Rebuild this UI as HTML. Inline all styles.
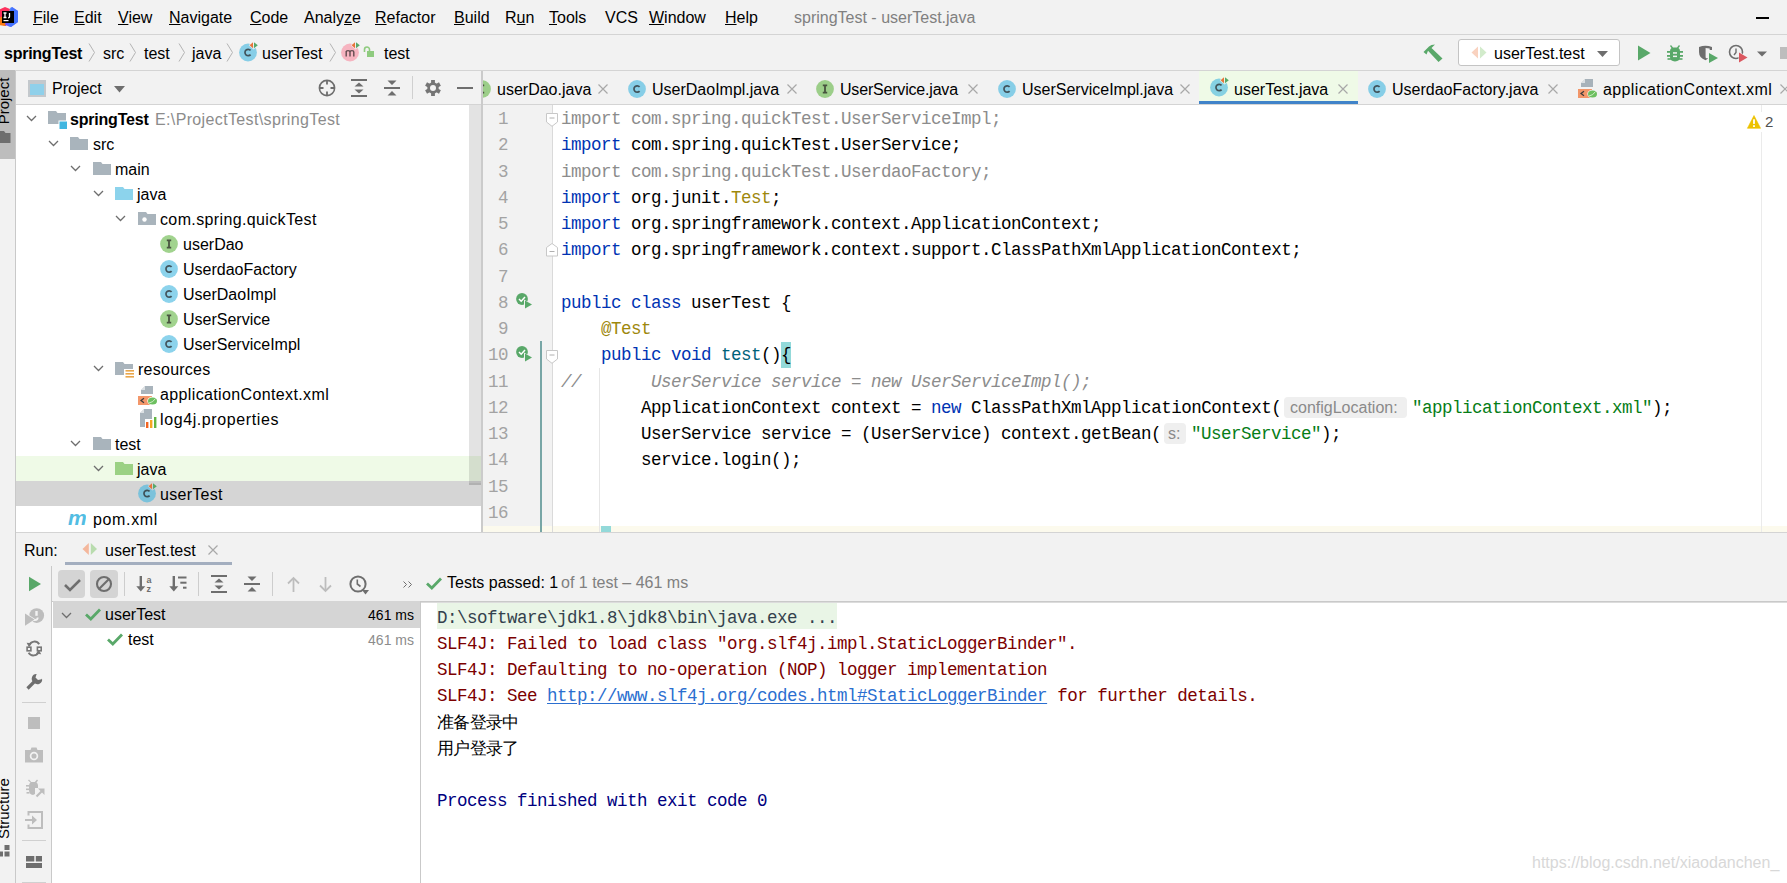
<!DOCTYPE html>
<html><head><meta charset="utf-8"><title>springTest - userTest.java</title>
<style>
*{margin:0;padding:0;box-sizing:border-box}
html,body{width:1787px;height:883px;overflow:hidden;background:#f2f2f2;font-family:"Liberation Sans",sans-serif;font-size:16px;color:#000;position:relative}
.a{position:absolute}
.t{position:absolute;white-space:pre;line-height:20px;font-size:16px}
.u{text-decoration:underline;text-underline-offset:1px}
.m{position:absolute;white-space:pre;font-family:"Liberation Mono",monospace;font-size:17.5px;letter-spacing:-0.5px;line-height:26px}
svg{position:absolute;overflow:visible}
body{--bg:#f2f2f2}
</style></head><body>
<svg width="0" height="0" style="position:absolute;left:0;top:0"><defs>
<g id="ic-c"><circle cx="10" cy="10" r="8.9" fill="#40b6e0" fill-opacity=".6"/><path d="M12.6,7.9 A3.2,3.2 0 1 0 12.6,12.1" fill="none" stroke="#231f20" stroke-opacity=".7" stroke-width="1.7"/></g>
<g id="ic-i"><circle cx="10" cy="10" r="8.9" fill="#62b543" fill-opacity=".6"/><path d="M7.8,6.3 H12.2 M10,6.3 V13.7 M7.8,13.7 H12.2" fill="none" stroke="#231f20" stroke-opacity=".7" stroke-width="1.8"/></g>
<g id="mark"><path d="M14,0.3 V6.3 L10.6,3.3Z" fill="#e8743a" stroke="var(--bg)" stroke-width="1.1" paint-order="stroke"/><path d="M15,0.3 V6.3 L18.8,3.3Z" fill="#59a869" stroke="var(--bg)" stroke-width="1.1" paint-order="stroke"/></g>
<g id="ic-ctest"><circle cx="9" cy="10.5" r="8.9" fill="#40b6e0" fill-opacity=".6"/><path d="M11.6,8.4 A3.2,3.2 0 1 0 11.6,12.6" fill="none" stroke="#231f20" stroke-opacity=".7" stroke-width="1.7"/><use href="#mark"/></g>
<g id="ic-mtest"><circle cx="9" cy="10.5" r="8.9" fill="#f98b9e" fill-opacity=".6"/><path d="M5.2,14.5 V9 M5.2,10 Q5.2,8.6 7,8.6 Q9,8.6 9,10 V14.5 M9,10 Q9,8.6 11,8.6 Q12.8,8.6 12.8,10 V14.5" fill="none" stroke="#231f20" stroke-opacity=".7" stroke-width="1.4"/><use href="#mark"/></g>
<g id="fold"><path d="M0,0 H18 V13 H0Z M0,0 H8 L9.5,2 H0Z" fill="#9aa7b0" fill-opacity=".85"/></g>
<g id="chev"><path d="M1,1 L5.5,5.5 L10,1" fill="none" stroke="#6e6e6e" stroke-width="1.3"/></g>
<g id="xclose"><path d="M0.5,0.5 L9.5,9.5 M9.5,0.5 L0.5,9.5" fill="none" stroke="#a8a8a8" stroke-width="1.2"/></g>
</defs></svg>
<div class="a" style="left:0;top:34px;width:1787px;height:1px;background:#d4d4d4"></div>
<svg style="left:0;top:6px" width="20" height="22" viewBox="0 0 20 22">
<path d="M-2,4 L5,1 L10,3 L6,20 L-2,18Z" fill="#fe315d"/>
<path d="M-2,12 L4,10 L6,20 L-2,19Z" fill="#f97a12"/>
<path d="M9,6 L12,1 L18,5 L18,16 L11,21 L5,19Z" fill="#6b57ff"/>
<path d="M10,2 L12,1 L18,5 L18,16 L11,21 L8,20Z" fill="#3b7cff" fill-opacity=".8"/>
<rect x="2" y="5" width="12" height="12" fill="#000"/>
<path d="M3.5,7 H6.5 M5,7 V11.5 M3.5,11.5 H6.5 M9.5,7 V10.5 Q9.5,12 8,11.8" fill="none" stroke="#fff" stroke-width="1.3"/>
<rect x="3.5" y="14" width="5" height="1.2" fill="#fff"/>
</svg>
<span class="t" style="left:33px;top:8px;"><span class="u">F</span>ile</span>
<span class="t" style="left:74px;top:8px;"><span class="u">E</span>dit</span>
<span class="t" style="left:118px;top:8px;"><span class="u">V</span>iew</span>
<span class="t" style="left:169px;top:8px;"><span class="u">N</span>avigate</span>
<span class="t" style="left:250px;top:8px;"><span class="u">C</span>ode</span>
<span class="t" style="left:304px;top:8px;">Analy<span class="u">z</span>e</span>
<span class="t" style="left:375px;top:8px;"><span class="u">R</span>efactor</span>
<span class="t" style="left:454px;top:8px;"><span class="u">B</span>uild</span>
<span class="t" style="left:505px;top:8px;">R<span class="u">u</span>n</span>
<span class="t" style="left:549px;top:8px;"><span class="u">T</span>ools</span>
<span class="t" style="left:605px;top:8px;">VCS</span>
<span class="t" style="left:649px;top:8px;"><span class="u">W</span>indow</span>
<span class="t" style="left:725px;top:8px;"><span class="u">H</span>elp</span>
<span class="t" style="left:794px;top:8px;color:#808080">springTest - userTest.java</span>
<div class="a" style="left:1756px;top:17px;width:13px;height:1.5px;background:#000"></div>
<div class="a" style="left:0;top:70px;width:1787px;height:1px;background:#d4d4d4"></div>
<span class="t" style="left:4px;top:44px;font-weight:bold;letter-spacing:-0.25px">springTest</span>
<svg style="left:88px;top:43px" width="8" height="20"><path d="M1,0.5 L6.5,9.5 L1,18.5" fill="none" stroke="#b4b4b4" stroke-width="1"/></svg>
<svg style="left:129px;top:43px" width="8" height="20"><path d="M1,0.5 L6.5,9.5 L1,18.5" fill="none" stroke="#b4b4b4" stroke-width="1"/></svg>
<svg style="left:178px;top:43px" width="8" height="20"><path d="M1,0.5 L6.5,9.5 L1,18.5" fill="none" stroke="#b4b4b4" stroke-width="1"/></svg>
<svg style="left:226px;top:43px" width="8" height="20"><path d="M1,0.5 L6.5,9.5 L1,18.5" fill="none" stroke="#b4b4b4" stroke-width="1"/></svg>
<svg style="left:329px;top:43px" width="8" height="20"><path d="M1,0.5 L6.5,9.5 L1,18.5" fill="none" stroke="#b4b4b4" stroke-width="1"/></svg>
<span class="t" style="left:103px;top:44px;">src</span>
<span class="t" style="left:144px;top:44px;">test</span>
<span class="t" style="left:192px;top:44px;">java</span>
<svg style="left:239px;top:42px" width="20" height="20" viewBox="0 0 20 20"><use href="#ic-ctest"/></svg>
<span class="t" style="left:262px;top:44px;">userTest</span>
<svg style="left:341px;top:42px" width="20" height="20" viewBox="0 0 20 20"><use href="#ic-mtest"/></svg>
<svg style="left:363px;top:46px" width="12" height="12" viewBox="0 0 12 12"><path d="M1.5,6 V3.5 A2.5,2.5 0 0 1 6.5,3.5 V5" fill="none" stroke="#8fcb7f" stroke-width="1.6"/><rect x="4" y="5" width="7" height="6" fill="#8fcb7f"/></svg>
<span class="t" style="left:384px;top:44px;">test</span>
<svg style="left:1423px;top:43px" width="20" height="20" viewBox="0 0 20 20"><path d="M0.5,9 L6,3.5 Q8,1.5 12,1.5 L10,3.5 L8.5,5 L19.5,15.5 L15.5,19 L5,7.8 L3.5,11.5 Z" fill="#59a869"/></svg>
<div class="a" style="left:1458px;top:39px;width:162px;height:27px;border:1px solid #c4c4c4;border-radius:3px;background:#fff"></div>
<svg style="left:1471px;top:46px" width="16" height="14" viewBox="0 0 16 14"><path d="M7,0.5 L7,12.5 L0.5,6.5Z" fill="#f9d2bf"/><path d="M9,0.5 L9,12.5 L15.5,6.5Z" fill="#d2ebcb"/></svg>
<span class="t" style="left:1494px;top:44px;">userTest.test</span>
<svg style="left:1597px;top:51px" width="12" height="7" viewBox="0 0 12 7"><path d="M0,0 H11 L5.5,6Z" fill="#6e6e6e"/></svg>
<svg style="left:1637px;top:45px" width="14" height="16" viewBox="0 0 14 16"><path d="M1,0.5 L13.5,8 L1,15.5Z" fill="#59a869"/></svg>
<svg style="left:1666px;top:44px" width="18" height="18" viewBox="0 0 18 18"><g fill="#59a869"><path d="M5,1 L7,3.5 H11 L13,1 L14,2 L12.5,4 Q14,5 14,7 V13 Q14,17 9,17.5 Q4,17 4,13 V7 Q4,5 5.5,4 L4,2Z"/><rect x="1" y="7" width="16" height="1.8"/><rect x="1" y="11" width="16" height="1.8"/><rect x="1.5" y="14.2" width="15" height="1.6"/></g><rect x="7" y="8.2" width="4" height="1.5" fill="#f2f2f2"/><rect x="7" y="11.6" width="4" height="1.5" fill="#f2f2f2"/></svg>
<svg style="left:1698px;top:45px" width="22" height="19" viewBox="0 0 22 19"><path d="M1,1.9 Q7.5,-0.4 14,1.9 V5 H11.7 V3.6 Q9.5,3 7.6,3 V12 Q7.6,13.2 8.6,13.2 H10 V13.6 Q8.5,15 7.5,15.2 Q1,13 1,7Z" fill="#6e6e6e"/><path d="M11,8 L20,13 L11,18Z" fill="#59a869"/></svg>
<svg style="left:1728px;top:44px" width="22" height="20" viewBox="0 0 22 20"><circle cx="8" cy="8" r="6.5" fill="none" stroke="#6e6e6e" stroke-width="1.6"/><path d="M8,4.5 V8.5 L6,11" fill="none" stroke="#6e6e6e" stroke-width="1.4"/><path d="M10.5,7.5 L20,13 L10.5,19Z" fill="#f2f2f2"/><path d="M11,8.5 L19.5,13.5 L11,18.5Z" fill="#db5860"/></svg>
<svg style="left:1757px;top:51px" width="11" height="7" viewBox="0 0 11 7"><path d="M0,0.5 H10 L5,5.5Z" fill="#6e6e6e"/></svg>
<div class="a" style="left:1780px;top:47px;width:7px;height:12px;background:#bdbdbd"></div>
<div class="a" style="left:15px;top:71px;width:1px;height:812px;background:#c9c9c9"></div>
<div class="a" style="left:0;top:70px;width:15px;height:89px;background:#bdbdbd"></div>
<span class="t" style="left:-26px;top:91px;transform:rotate(-90deg);transform-origin:center;width:60px;text-align:center;font-size:15px">Project</span>
<svg style="left:0;top:131px" width="11" height="12" viewBox="0 0 11 12"><path d="M-2,0 H4 L5.5,2 H10.5 V12 H-2Z" fill="#6e6e6e"/></svg>
<span class="t" style="left:-26px;top:799px;transform:rotate(-90deg);transform-origin:center;width:60px;text-align:center;font-size:15px">Structure</span>
<svg style="left:0;top:845px" width="10" height="12" viewBox="0 0 10 12"><rect x="4.5" y="0" width="5" height="5" fill="#6e6e6e"/><rect x="-2" y="6.5" width="5" height="5" fill="#6e6e6e"/><rect x="4.5" y="6.5" width="5" height="5" fill="#6e6e6e"/></svg>
<div class="a" style="left:16px;top:104px;width:465px;height:1px;background:#d4d4d4"></div>
<div class="a" style="left:16px;top:105px;width:465px;height:427px;background:#fff"></div>
<svg style="left:28px;top:80px" width="18" height="17" viewBox="0 0 18 17"><rect x="0" y="0" width="18" height="17" fill="#c3c8cc"/><rect x="2" y="4" width="14" height="11" fill="#8fd0ea"/></svg>
<span class="t" style="left:52px;top:79px;">Project</span>
<svg style="left:114px;top:86px" width="12" height="7" viewBox="0 0 12 7"><path d="M0,0 H11 L5.5,6.5Z" fill="#6e6e6e"/></svg>
<svg style="left:318px;top:79px" width="18" height="18" viewBox="0 0 18 18"><circle cx="9" cy="9" r="7.6" fill="none" stroke="#6e6e6e" stroke-width="1.6"/><path d="M9,1.5 V5.5 M9,12.5 V16.5 M1.5,9 H5.5 M12.5,9 H16.5" stroke="#6e6e6e" stroke-width="1.8"/></svg>
<svg style="left:351px;top:79px" width="16" height="18" viewBox="0 0 16 18"><rect x="0" y="0" width="16" height="2" fill="#6e6e6e"/><rect x="0" y="16" width="16" height="2" fill="#6e6e6e"/><path d="M3.5,7.5 L8,3.5 L12.5,7.5Z M3.5,10.5 L8,14.5 L12.5,10.5Z" fill="#6e6e6e"/></svg>
<svg style="left:384px;top:80px" width="16" height="16" viewBox="0 0 16 16"><rect x="0" y="7" width="16" height="2" fill="#6e6e6e"/><path d="M3.5,0.5 L8,5 L12.5,0.5Z M3.5,15.5 L8,11 L12.5,15.5Z" fill="#6e6e6e"/></svg>
<div class="a" style="left:412px;top:76px;width:1px;height:23px;background:#d0d0d0"></div>
<svg style="left:425px;top:80px" width="16" height="16" viewBox="0 0 16 16"><g fill="#757575"><circle cx="8" cy="8" r="5.7"/>
<rect x="6.1" y="0" width="3.8" height="16"/><rect x="6.1" y="0" width="3.8" height="16" transform="rotate(60 8 8)"/><rect x="6.1" y="0" width="3.8" height="16" transform="rotate(120 8 8)"/></g><circle cx="8" cy="8" r="3" fill="#f2f2f2"/></svg>
<div class="a" style="left:457px;top:87px;width:16px;height:2px;background:#6e6e6e"></div>
<div class="a" style="left:16px;top:456px;width:465px;height:25px;background:#effae7"></div>
<div class="a" style="left:16px;top:481px;width:465px;height:25px;background:#d5d5d5"></div>
<div class="a" style="left:469px;top:105px;width:12px;height:380px;background:rgba(0,0,0,0.11);border-bottom:2px solid rgba(0,0,0,0.06)"></div>
<svg style="left:26px;top:115px" width="11" height="7" viewBox="0 0 11 7"><use href="#chev"/></svg>
<svg style="left:48px;top:111px" width="20" height="18" viewBox="0 0 20 18"><path d="M0,0 H8 L9.5,2 H18 V13 H0Z" fill="#9aa7b0" fill-opacity=".85"/><rect x="10.5" y="9.5" width="9" height="8.5" fill="#fff"/><rect x="11.5" y="10.5" width="7.5" height="7.5" fill="#40b6e0"/></svg>
<span class="t" style="left:70px;top:110px;font-weight:bold;letter-spacing:-0.2px">springTest</span>
<span class="t" style="left:155px;top:110px;color:#8c8c8c;letter-spacing:0.36px">E:\ProjectTest\springTest</span>
<svg style="left:48px;top:140px" width="11" height="7" viewBox="0 0 11 7"><use href="#chev"/></svg>
<svg style="left:70px;top:137px" width="18" height="13" viewBox="0 0 18 13"><path d="M0,0 H8 L9.5,2 H18 V13 H0Z" fill="#9aa7b0" fill-opacity=".85"/></svg>
<span class="t" style="left:93px;top:135px;">src</span>
<svg style="left:70px;top:165px" width="11" height="7" viewBox="0 0 11 7"><use href="#chev"/></svg>
<svg style="left:93px;top:162px" width="18" height="13" viewBox="0 0 18 13"><path d="M0,0 H8 L9.5,2 H18 V13 H0Z" fill="#9aa7b0" fill-opacity=".85"/></svg>
<span class="t" style="left:115px;top:160px;">main</span>
<svg style="left:93px;top:190px" width="11" height="7" viewBox="0 0 11 7"><use href="#chev"/></svg>
<svg style="left:115px;top:187px" width="18" height="13" viewBox="0 0 18 13"><path d="M0,0 H8 L9.5,2 H18 V13 H0Z" fill="#40b6e0" fill-opacity=".6"/></svg>
<span class="t" style="left:137px;top:185px;">java</span>
<svg style="left:115px;top:215px" width="11" height="7" viewBox="0 0 11 7"><use href="#chev"/></svg>
<svg style="left:138px;top:212px" width="18" height="13" viewBox="0 0 18 13"><path d="M0,0 H8 L9.5,2 H18 V13 H0Z" fill="#9aa7b0" fill-opacity=".85"/><circle cx="6.5" cy="7.5" r="2.2" fill="#fff"/></svg>
<span class="t" style="left:160px;top:210px;letter-spacing:0.37px">com.spring.quickTest</span>
<svg style="left:159px;top:234px" width="20" height="20" viewBox="0 0 20 20"><use href="#ic-i"/></svg>
<span class="t" style="left:183px;top:235px;">userDao</span>
<svg style="left:159px;top:259px" width="20" height="20" viewBox="0 0 20 20"><use href="#ic-c"/></svg>
<span class="t" style="left:183px;top:260px;">UserdaoFactory</span>
<svg style="left:159px;top:284px" width="20" height="20" viewBox="0 0 20 20"><use href="#ic-c"/></svg>
<span class="t" style="left:183px;top:285px;">UserDaoImpl</span>
<svg style="left:159px;top:309px" width="20" height="20" viewBox="0 0 20 20"><use href="#ic-i"/></svg>
<span class="t" style="left:183px;top:310px;">UserService</span>
<svg style="left:159px;top:334px" width="20" height="20" viewBox="0 0 20 20"><use href="#ic-c"/></svg>
<span class="t" style="left:183px;top:335px;">UserServiceImpl</span>
<svg style="left:93px;top:365px" width="11" height="7" viewBox="0 0 11 7"><use href="#chev"/></svg>
<svg style="left:115px;top:362px" width="20" height="17" viewBox="0 0 20 17"><path d="M0,0 H8 L9.5,2 H18 V13 H0Z" fill="#9aa7b0" fill-opacity=".85"/><rect x="9" y="7" width="11" height="10" fill="#fff"/><g fill="#e9a64a"><rect x="10.5" y="8" width="8.5" height="1.6"/><rect x="10.5" y="11" width="8.5" height="1.6"/><rect x="10.5" y="14" width="8.5" height="1.6"/></g></svg>
<span class="t" style="left:138px;top:360px;letter-spacing:0.25px">resources</span>
<svg style="left:138px;top:386px" width="20" height="20" viewBox="0 0 20 20"><path d="M3,8 V4 L7,0 H15 V8Z" fill="#9aa7b0" fill-opacity=".85"/><path d="M3,4 L7,0 V4Z" fill="#fff" fill-opacity=".6"/>
<rect x="0" y="10" width="14" height="9" fill="#f28c5a" fill-opacity=".9"/><path d="M6,12.3 L3,14.5 L6,16.7" fill="none" stroke="#3b3b3b" stroke-width="1.2"/>
<ellipse cx="14.5" cy="15" rx="5.2" ry="4.2" fill="#fff"/><ellipse cx="14.5" cy="15" rx="4.5" ry="3.6" fill="#6cbf5f"/><path d="M11,17 Q15,16.5 17.5,12.5" fill="none" stroke="#d8f0d0" stroke-width=".9"/></svg>
<span class="t" style="left:160px;top:385px;letter-spacing:0.37px">applicationContext.xml</span>
<svg style="left:140px;top:409px" width="18" height="20" viewBox="0 0 18 20"><path d="M0,18 V4 L4,0 H12 V10 H5 V18Z" fill="#9aa7b0" fill-opacity=".85"/><path d="M0,4 L4,0 V4Z" fill="#fff" fill-opacity=".6"/>
<rect x="6" y="13" width="2.4" height="6" fill="#f26522"/><rect x="10" y="11" width="2.4" height="8" fill="#f5a623"/><rect x="14" y="8" width="2.4" height="11" fill="#62b543"/></svg>
<span class="t" style="left:160px;top:410px;letter-spacing:0.6px">log4j.properties</span>
<svg style="left:70px;top:440px" width="11" height="7" viewBox="0 0 11 7"><use href="#chev"/></svg>
<svg style="left:93px;top:437px" width="18" height="13" viewBox="0 0 18 13"><path d="M0,0 H8 L9.5,2 H18 V13 H0Z" fill="#9aa7b0" fill-opacity=".85"/></svg>
<span class="t" style="left:115px;top:435px;">test</span>
<svg style="left:93px;top:465px" width="11" height="7" viewBox="0 0 11 7"><use href="#chev"/></svg>
<svg style="left:115px;top:462px" width="18" height="13" viewBox="0 0 18 13"><path d="M0,0 H8 L9.5,2 H18 V13 H0Z" fill="#62b543" fill-opacity=".6"/></svg>
<span class="t" style="left:137px;top:460px;">java</span>
<svg style="left:138px;top:483px" width="20" height="22" viewBox="0 0 20 22" style="--bg:#d5d5d5"><use href="#ic-ctest" style="--bg:#d5d5d5"/></svg>
<span class="t" style="left:160px;top:485px;letter-spacing:0.3px">userTest</span>
<span class="t" style="left:68px;top:508px;font-size:21px;font-weight:bold;font-style:italic;color:#40b6e0;opacity:.9;letter-spacing:-1px">m</span>
<span class="t" style="left:93px;top:510px;letter-spacing:0.65px">pom.xml</span>
<div class="a" style="left:481px;top:71px;width:2px;height:461px;background:#cbcbcb"></div>
<div class="a" style="left:483px;top:104px;width:1304px;height:1px;background:#d4d4d4"></div>
<div class="a" style="left:483px;top:105px;width:69px;height:427px;background:#f2f2f2"></div>
<div class="a" style="left:552px;top:105px;width:1px;height:427px;background:#dadada"></div>
<div class="a" style="left:553px;top:105px;width:1234px;height:427px;background:#fff"></div>
<div class="a" style="left:1199px;top:71px;width:159px;height:33px;background:#effae7"></div>
<div class="a" style="left:1199px;top:101px;width:159px;height:3px;background:#4083c9"></div>
<div class="a" style="left:483px;top:79px;width:10px;height:20px;overflow:hidden"><svg style="left:-11px;top:0" width="20" height="20" viewBox="0 0 20 20"><use href="#ic-i"/></svg></div>
<div class="a" style="left:481px;top:71px;width:2px;height:33px;background:#cbcbcb"></div>
<span class="t" style="left:497px;top:80px;">userDao.java</span>
<svg style="left:598px;top:84px" width="10" height="10" viewBox="0 0 10 10"><use href="#xclose"/></svg>
<svg style="left:627px;top:79px" width="20" height="20" viewBox="0 0 20 20"><use href="#ic-c"/></svg>
<span class="t" style="left:652px;top:80px;">UserDaoImpl.java</span>
<svg style="left:787px;top:84px" width="10" height="10" viewBox="0 0 10 10"><use href="#xclose"/></svg>
<svg style="left:815px;top:79px" width="20" height="20" viewBox="0 0 20 20"><use href="#ic-i"/></svg>
<span class="t" style="left:840px;top:80px;letter-spacing:-0.19px">UserService.java</span>
<svg style="left:968px;top:84px" width="10" height="10" viewBox="0 0 10 10"><use href="#xclose"/></svg>
<svg style="left:997px;top:79px" width="20" height="20" viewBox="0 0 20 20"><use href="#ic-c"/></svg>
<span class="t" style="left:1022px;top:80px;">UserServiceImpl.java</span>
<svg style="left:1180px;top:84px" width="10" height="10" viewBox="0 0 10 10"><use href="#xclose"/></svg>
<svg style="left:1210px;top:77px" width="20" height="22" viewBox="0 0 20 22" style="--bg:#effae7"><use href="#ic-ctest" style="--bg:#effae7"/></svg>
<span class="t" style="left:1234px;top:80px;">userTest.java</span>
<svg style="left:1338px;top:84px" width="10" height="10" viewBox="0 0 10 10"><use href="#xclose"/></svg>
<svg style="left:1367px;top:79px" width="20" height="20" viewBox="0 0 20 20"><use href="#ic-c"/></svg>
<span class="t" style="left:1392px;top:80px;">UserdaoFactory.java</span>
<svg style="left:1548px;top:84px" width="10" height="10" viewBox="0 0 10 10"><use href="#xclose"/></svg>
<svg style="left:1578px;top:79px" width="20" height="20" viewBox="0 0 20 20"><path d="M3,8 V4 L7,0 H15 V8Z" fill="#9aa7b0" fill-opacity=".85"/><path d="M3,4 L7,0 V4Z" fill="#fff" fill-opacity=".6"/>
<rect x="0" y="10" width="14" height="9" fill="#f28c5a" fill-opacity=".9"/><path d="M6,12.3 L3,14.5 L6,16.7" fill="none" stroke="#3b3b3b" stroke-width="1.2"/>
<ellipse cx="14.5" cy="15" rx="5.2" ry="4.2" fill="#f2f2f2"/><ellipse cx="14.5" cy="15" rx="4.5" ry="3.6" fill="#6cbf5f"/><path d="M11,17 Q15,16.5 17.5,12.5" fill="none" stroke="#d8f0d0" stroke-width=".9"/></svg>
<span class="t" style="left:1603px;top:80px;letter-spacing:0.37px">applicationContext.xml</span>
<svg style="left:1780px;top:84px" width="10" height="10" viewBox="0 0 10 10"><use href="#xclose"/></svg>
<div class="a" style="left:483px;top:526px;width:1304px;height:6px;background:#fcfaed"></div>
<div class="a" style="left:552px;top:526px;width:1px;height:6px;background:#dadada"></div>
<div class="a" style="left:601px;top:526px;width:10px;height:6px;background:#93d9d9"></div>
<div class="a" style="left:1761px;top:105px;width:1px;height:427px;background:#ebebeb"></div>
<div class="a" style="left:1743px;top:112px;width:36px;height:20px;background:#fff"></div><svg style="left:1747px;top:115px" width="14" height="14" viewBox="0 0 14 14"><path d="M7,0.5 L13.6,13.3 H0.4Z" fill="#edc200" stroke="#edc200" stroke-width=".6" stroke-linejoin="round"/><rect x="6.1" y="4.3" width="1.8" height="4.6" fill="#fff"/><rect x="6.1" y="10.2" width="1.8" height="1.8" fill="#fff"/></svg>
<span class="t" style="left:1765px;top:112px;color:#505050;font-size:15px">2</span>
<span class="m" style="left:458px;top:106.00px;width:50px;text-align:right;color:#a3a3a3">1</span>
<span class="m" style="left:458px;top:132.25px;width:50px;text-align:right;color:#a3a3a3">2</span>
<span class="m" style="left:458px;top:158.50px;width:50px;text-align:right;color:#a3a3a3">3</span>
<span class="m" style="left:458px;top:184.75px;width:50px;text-align:right;color:#a3a3a3">4</span>
<span class="m" style="left:458px;top:211.00px;width:50px;text-align:right;color:#a3a3a3">5</span>
<span class="m" style="left:458px;top:237.25px;width:50px;text-align:right;color:#a3a3a3">6</span>
<span class="m" style="left:458px;top:263.50px;width:50px;text-align:right;color:#a3a3a3">7</span>
<span class="m" style="left:458px;top:289.75px;width:50px;text-align:right;color:#a3a3a3">8</span>
<span class="m" style="left:458px;top:316.00px;width:50px;text-align:right;color:#a3a3a3">9</span>
<span class="m" style="left:458px;top:342.25px;width:50px;text-align:right;color:#a3a3a3">10</span>
<span class="m" style="left:458px;top:368.50px;width:50px;text-align:right;color:#a3a3a3">11</span>
<span class="m" style="left:458px;top:394.75px;width:50px;text-align:right;color:#a3a3a3">12</span>
<span class="m" style="left:458px;top:421.00px;width:50px;text-align:right;color:#a3a3a3">13</span>
<span class="m" style="left:458px;top:447.25px;width:50px;text-align:right;color:#a3a3a3">14</span>
<span class="m" style="left:458px;top:473.50px;width:50px;text-align:right;color:#a3a3a3">15</span>
<span class="m" style="left:458px;top:499.75px;width:50px;text-align:right;color:#a3a3a3">16</span>
<svg style="left:516px;top:293px" width="17" height="17" viewBox="0 0 17 17"><circle cx="6" cy="6" r="5.9" fill="#59a869"/><path d="M3,6 L5.2,8.2 L9,4" fill="none" stroke="#fff" stroke-width="1.5"/><path d="M8,6.5 L16.5,11.5 L8,16.5Z" fill="#f2f2f2"/><path d="M9,7.5 L16,11.5 L9,15.5Z" fill="#59a869"/></svg>
<svg style="left:516px;top:346px" width="17" height="17" viewBox="0 0 17 17"><circle cx="6" cy="6" r="5.9" fill="#59a869"/><path d="M3,6 L5.2,8.2 L9,4" fill="none" stroke="#fff" stroke-width="1.5"/><path d="M8,6.5 L16.5,11.5 L8,16.5Z" fill="#f2f2f2"/><path d="M9,7.5 L16,11.5 L9,15.5Z" fill="#59a869"/></svg>
<div class="a" style="left:540px;top:341px;width:2px;height:191px;background:#78a6a6"></div>
<svg style="left:546px;top:113px" width="13" height="14" viewBox="0 0 13 14"><path d="M0.5,0.5 H11.5 V9 L6,13.3 L0.5,9Z" fill="#fff" stroke="#c8c8c8" stroke-width="1"/><path d="M3.5,5 H8.5" stroke="#b0b0b0" stroke-width="1"/></svg>
<svg style="left:546px;top:243px" width="13" height="14" viewBox="0 0 13 14"><path d="M0.5,13 H11.5 V4.5 L6,0.5 L0.5,4.5Z" fill="#fff" stroke="#c8c8c8" stroke-width="1"/><path d="M3.5,8.5 H8.5" stroke="#b0b0b0" stroke-width="1"/></svg>
<svg style="left:546px;top:350px" width="13" height="14" viewBox="0 0 13 14"><path d="M0.5,0.5 H11.5 V9 L6,13.3 L0.5,9Z" fill="#fff" stroke="#c8c8c8" stroke-width="1"/><path d="M3.5,5 H8.5" stroke="#b0b0b0" stroke-width="1"/></svg>
<div class="a" style="left:599px;top:368px;width:1px;height:164px;background:#e6e6e6"></div>
<div class="a" style="left:781px;top:342.25px;width:10px;height:26px;background:#93d9d9"></div>
<span class="m" style="left:561px;top:106.00px"><span style="color:#8c8c8c">import com.spring.quickTest.UserServiceImpl;</span></span>
<span class="m" style="left:561px;top:132.25px"><span style="color:#0033b3">import</span> com.spring.quickTest.UserService;</span>
<span class="m" style="left:561px;top:158.50px"><span style="color:#8c8c8c">import com.spring.quickTest.UserdaoFactory;</span></span>
<span class="m" style="left:561px;top:184.75px"><span style="color:#0033b3">import</span> org.junit.<span style="color:#9e880d">Test</span>;</span>
<span class="m" style="left:561px;top:211.00px"><span style="color:#0033b3">import</span> org.springframework.context.ApplicationContext;</span>
<span class="m" style="left:561px;top:237.25px"><span style="color:#0033b3">import</span> org.springframework.context.support.ClassPathXmlApplicationContext;</span>
<span class="m" style="left:561px;top:289.75px"><span style="color:#0033b3">public class</span> userTest {</span>
<span class="m" style="left:561px;top:316.00px">    <span style="color:#9e880d">@Test</span></span>
<span class="m" style="left:561px;top:342.25px">    <span style="color:#0033b3">public void</span> <span style="color:#00627a">test</span>(){</span>
<span class="m" style="left:561px;top:368.50px"><span style="color:#8c8c8c;font-style:italic">//       UserService service = new UserServiceImpl();</span></span>
<span class="m" style="left:561px;top:394.75px">        ApplicationContext context = <span style="color:#0033b3">new</span> ClassPathXmlApplicationContext(</span>
<span class="m" style="left:561px;top:421.00px">        UserService service = (UserService) context.getBean(</span>
<span class="m" style="left:561px;top:447.25px">        service.login();</span>
<div class="a" style="left:1284px;top:396.75px;width:123px;height:21px;border-radius:4px;background:#efefef"></div>
<span class="t" style="left:1290px;top:397.75px;color:#8a8a8a;font-size:16px">configLocation:</span>
<span class="m" style="left:1412px;top:394.75px"><span style="color:#067d17">"applicationContext.xml"</span>);</span>
<div class="a" style="left:1164px;top:423.00px;width:22px;height:21px;border-radius:4px;background:#efefef"></div>
<span class="t" style="left:1168px;top:424.0px;color:#8a8a8a;font-size:16px">s:</span>
<span class="m" style="left:1191px;top:421.00px"><span style="color:#067d17">"UserService"</span>);</span>
<div class="a" style="left:16px;top:532px;width:1771px;height:1px;background:#d4d4d4"></div>
<span class="t" style="left:24px;top:541px;">Run:</span>
<svg style="left:82px;top:543px" width="16" height="13" viewBox="0 0 16 13"><path d="M6.8,0 V12 L0.5,6Z" fill="#f4b79c"/><path d="M8.8,0 V12 L15,6Z" fill="#b9dcae"/></svg>
<span class="t" style="left:105px;top:541px;">userTest.test</span>
<svg style="left:208px;top:545px" width="10" height="10" viewBox="0 0 10 10"><use href="#xclose"/></svg>
<div class="a" style="left:65px;top:562px;width:167px;height:3px;background:#a3aebf"></div>
<div class="a" style="left:51px;top:566px;width:1px;height:317px;background:#c9c9c9"></div>
<svg style="left:28px;top:576px" width="14" height="16" viewBox="0 0 14 16"><path d="M1,0.7 L13,8 L1,15.3Z" fill="#59a869"/></svg>
<svg style="left:25px;top:608px" width="20" height="18" viewBox="0 0 20 18"><circle cx="11.7" cy="7.6" r="7.4" fill="#bdbdbd"/><rect x="10.3" y="3" width="2.4" height="4.8" fill="#f2f2f2"/><path d="M12.7,9.5 Q12.7,12 10,12 H8.5" fill="none" stroke="#f2f2f2" stroke-width="1.8"/><path d="M-0.8,4 L10.8,11.6 L-0.8,19.2Z" fill="#f2f2f2"/><path d="M0,5.4 L9.5,11.6 L0,17.8Z" fill="#bdbdbd"/></svg>
<svg style="left:26px;top:639px" width="16" height="19" viewBox="0 0 16 19"><path d="M3.2,6.2 A5.6,5.6 0 0 1 13.2,5.2" fill="none" stroke="#777" stroke-width="1.9"/><path d="M0.6,3.8 L5.8,4.2 L3,8.2Z" fill="#777"/><path d="M12.6,12.8 A5.6,5.6 0 0 1 2.6,13.8" fill="none" stroke="#777" stroke-width="1.9"/><path d="M15.2,15.2 L10,14.8 L12.8,10.8Z" fill="#777"/><rect x="1.1" y="8.2" width="3.8" height="3.6" fill="none" stroke="#777" stroke-width="1.6"/><rect x="11.4" y="8.2" width="3.8" height="3.6" fill="none" stroke="#777" stroke-width="1.6"/></svg>
<svg style="left:26px;top:673px" width="17" height="18" viewBox="0 0 17 18"><path d="M1.5,15.5 L9,8" stroke="#6e6e6e" stroke-width="3.2"/><path d="M8,9.5 A4.6,4.6 0 0 1 11,1 L10.5,1.2 L9.5,4.5 L12,7 L15.5,6.2 L16,5.5 A4.6,4.6 0 0 1 8,9.5Z" fill="#6e6e6e"/></svg>
<div class="a" style="left:22px;top:702px;width:24px;height:1px;background:#d0d0d0"></div>
<div class="a" style="left:28px;top:717px;width:12px;height:12px;background:#bdbdbd"></div>
<svg style="left:25px;top:747px" width="18" height="16" viewBox="0 0 18 16"><path d="M0,3 H5.5 L6.5,0.5 H11.5 L12.5,3 H18 V15.5 H0Z" fill="#bdbdbd"/><circle cx="9" cy="9" r="3.4" fill="none" stroke="#f2f2f2" stroke-width="1.7"/></svg>
<svg style="left:26px;top:779px" width="19" height="19" viewBox="0 0 19 19"><g fill="#bdbdbd"><path d="M3,0.5 L5.2,3 H8.8 L11,0.5 L12,1.5 L10.5,3.5 Q12,4.5 12,6.5 V9 H9 V15 L7,16 Q3,15.5 3,11 V6.5 Q3,4.5 4.5,3.5 L2,1.5Z"/><rect x="0" y="6" width="3" height="1.6"/><rect x="0" y="9.5" width="3" height="1.6"/><rect x="0.5" y="13" width="3" height="1.6"/></g><path d="M10.5,17.5 L17,11" stroke="#bdbdbd" stroke-width="2.2"/><path d="M12,9.5 H18.5 V16Z" fill="#bdbdbd"/></svg>
<svg style="left:25px;top:811px" width="18" height="18" viewBox="0 0 18 18"><path d="M3.5,4.5 V1 H17 V17 H3.5 V13.5" fill="none" stroke="#bdbdbd" stroke-width="2"/><path d="M0,9 H8" stroke="#bdbdbd" stroke-width="2"/><path d="M7,4.5 L12,9 L7,13.5Z" fill="#bdbdbd"/></svg>
<div class="a" style="left:22px;top:840px;width:24px;height:1px;background:#d0d0d0"></div>
<svg style="left:26px;top:856px" width="16" height="12" viewBox="0 0 16 12"><rect x="0" y="0" width="8.3" height="5.5" fill="#6e6e6e"/><rect x="9.8" y="0" width="6.2" height="5.5" fill="#6e6e6e"/><rect x="0" y="7" width="16" height="5" fill="#6e6e6e"/></svg>
<div class="a" style="left:22px;top:882px;width:24px;height:1px;background:#d0d0d0"></div>
<div class="a" style="left:58px;top:570px;width:27px;height:28px;border-radius:4px;background:#d4d4d4"></div>
<svg style="left:64px;top:578px" width="17" height="14" viewBox="0 0 17 14"><path d="M1,7 L6,12 L16,2" fill="none" stroke="#6e6e6e" stroke-width="2.6"/></svg>
<div class="a" style="left:90px;top:570px;width:28px;height:28px;border-radius:4px;background:#d4d4d4"></div>
<svg style="left:96px;top:576px" width="16" height="16" viewBox="0 0 16 16"><circle cx="8" cy="8" r="7" fill="none" stroke="#6e6e6e" stroke-width="2.1"/><path d="M3,13 L13,3" stroke="#6e6e6e" stroke-width="2.1"/></svg>
<div class="a" style="left:124px;top:572px;width:1px;height:24px;background:#cdcdcd"></div>
<svg style="left:136px;top:576px" width="18" height="16" viewBox="0 0 18 16"><path d="M4.8,0 V11" stroke="#6e6e6e" stroke-width="2.4"/><path d="M0.3,10.3 L4.8,15.5 L9.3,10.3Z" fill="#6e6e6e"/><text x="10.5" y="7" font-family="Liberation Sans" font-weight="bold" font-size="9" fill="#6e6e6e">a</text><text x="10.5" y="15.5" font-family="Liberation Sans" font-weight="bold" font-size="9" fill="#6e6e6e">z</text></svg>
<svg style="left:169px;top:576px" width="18" height="16" viewBox="0 0 18 16"><path d="M4.8,0 V11" stroke="#6e6e6e" stroke-width="2.4"/><path d="M0.3,10.3 L4.8,15.5 L9.3,10.3Z" fill="#6e6e6e"/><rect x="9" y="0.5" width="8.5" height="2" fill="#6e6e6e"/><rect x="11.3" y="5.7" width="6.2" height="2" fill="#6e6e6e"/><rect x="14" y="10.7" width="3.5" height="2" fill="#6e6e6e"/></svg>
<div class="a" style="left:198px;top:572px;width:1px;height:24px;background:#cdcdcd"></div>
<svg style="left:211px;top:575px" width="16" height="18" viewBox="0 0 16 18"><rect x="0" y="0" width="16" height="2" fill="#6e6e6e"/><rect x="0" y="16" width="16" height="2" fill="#6e6e6e"/><path d="M3.5,7.5 L8,3.5 L12.5,7.5Z M3.5,10.5 L8,14.5 L12.5,10.5Z" fill="#6e6e6e"/></svg>
<svg style="left:244px;top:576px" width="16" height="16" viewBox="0 0 16 16"><rect x="0" y="7" width="16" height="2" fill="#6e6e6e"/><path d="M3.5,0.5 L8,5 L12.5,0.5Z M3.5,15.5 L8,11 L12.5,15.5Z" fill="#6e6e6e"/></svg>
<div class="a" style="left:272px;top:572px;width:1px;height:24px;background:#cdcdcd"></div>
<svg style="left:287px;top:577px" width="13" height="15" viewBox="0 0 13 15"><path d="M6.5,1.5 V15" stroke="#bdbdbd" stroke-width="1.8"/><path d="M1,6.5 L6.5,1 L12,6.5" fill="none" stroke="#bdbdbd" stroke-width="1.8"/></svg>
<svg style="left:319px;top:577px" width="13" height="15" viewBox="0 0 13 15"><path d="M6.5,0 V13.5" stroke="#bdbdbd" stroke-width="1.8"/><path d="M1,8.5 L6.5,14 L12,8.5" fill="none" stroke="#bdbdbd" stroke-width="1.8"/></svg>
<svg style="left:349px;top:575px" width="21" height="21" viewBox="0 0 21 21"><circle cx="9" cy="9" r="7.6" fill="none" stroke="#6e6e6e" stroke-width="2"/><path d="M8.3,4.5 V9 L11.5,11.5" fill="none" stroke="#6e6e6e" stroke-width="1.6"/><path d="M13,15 H20 L16.5,19.5Z" fill="#6e6e6e"/></svg>
<svg style="left:403px;top:581px" width="10" height="7" viewBox="0 0 10 7"><path d="M0.5,0.5 L3.5,3.5 L0.5,6.5 M5.5,0.5 L8.5,3.5 L5.5,6.5" fill="none" stroke="#6e6e6e" stroke-width="1"/></svg>
<svg style="left:426px;top:577px" width="16" height="13" viewBox="0 0 16 13"><path d="M1,6.5 L5.8,11 L15,1.5" fill="none" stroke="#59a869" stroke-width="2.8"/></svg>
<span class="t" style="left:447px;top:573px;">Tests passed: 1</span>
<span class="t" style="left:561px;top:573px;color:#808080">of 1 test – 461 ms</span>
<div class="a" style="left:52px;top:601px;width:1735px;height:1px;background:#c9c9c9"></div>
<div class="a" style="left:421px;top:602px;width:1366px;height:1px;background:#dcdcdc"></div>
<div class="a" style="left:52px;top:602px;width:368px;height:281px;background:#fff"></div>
<div class="a" style="left:53px;top:601px;width:367px;height:27px;background:#d5d5d5"></div>
<svg style="left:61px;top:612px" width="11" height="7" viewBox="0 0 11 7"><use href="#chev"/></svg>
<svg style="left:85px;top:608px" width="16" height="13" viewBox="0 0 16 13"><path d="M1,6.5 L5.8,11 L15,1.5" fill="none" stroke="#59a869" stroke-width="2.8"/></svg>
<span class="t" style="left:105px;top:605px;">userTest</span>
<span class="t" style="left:314px;top:605px;font-size:14px;width:100px;text-align:right">461 ms</span>
<svg style="left:107px;top:633px" width="16" height="13" viewBox="0 0 16 13"><path d="M1,6.5 L5.8,11 L15,1.5" fill="none" stroke="#59a869" stroke-width="2.8"/></svg>
<span class="t" style="left:128px;top:630px;">test</span>
<span class="t" style="left:314px;top:630px;font-size:14px;color:#8c8c8c;width:100px;text-align:right">461 ms</span>
<div class="a" style="left:420px;top:602px;width:1px;height:281px;background:#c9c9c9"></div>
<div class="a" style="left:421px;top:603px;width:1366px;height:280px;background:#fff"></div>
<div class="a" style="left:437px;top:603px;width:400px;height:26px;background:#e9f5e6"></div>
<span class="m" style="left:437px;top:604.50px;color:#33414d">D:\software\jdk1.8\jdk8\bin\java.exe ...</span>
<span class="m" style="left:437px;top:630.67px;color:#7c0000">SLF4J: Failed to load class "org.slf4j.impl.StaticLoggerBinder".</span>
<span class="m" style="left:437px;top:656.84px;color:#7c0000">SLF4J: Defaulting to no-operation (NOP) logger implementation</span>
<span class="m" style="left:437px;top:683.01px;color:#7c0000">SLF4J: See <span style="color:#2b6fd0;text-decoration:underline;text-underline-offset:2px">http://www.slf4j.org/codes.html#StaticLoggerBinder</span> for further details.</span>
<span class="t" style="left:437px;top:712.18px;font-size:16.5px;letter-spacing:-0.7px">准备登录中</span>
<span class="t" style="left:437px;top:738.35px;font-size:16.5px;letter-spacing:-0.7px">用户登录了</span>
<span class="m" style="left:437px;top:787.69px;color:#000080">Process finished with exit code 0</span>
<span class="t" style="left:1532px;top:853px;color:#d8d8d8;font-size:16px">https://blog.csdn.net/xiaodanchen_</span>
</body></html>
